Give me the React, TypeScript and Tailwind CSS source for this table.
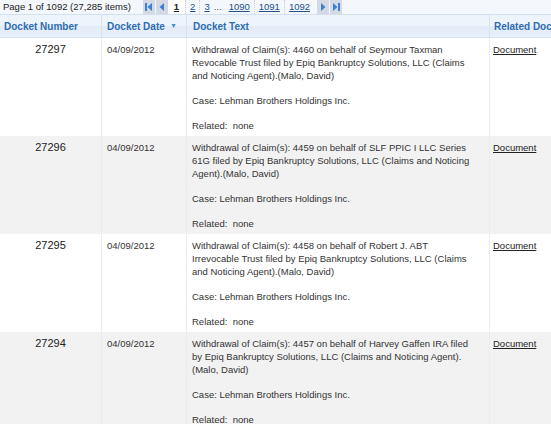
import React from "react";

type Row = {
  id: number;
  date: string;
  lines: string[];
};

const rows: Row[] = [
  {
    id: 27297,
    date: "04/09/2012",
    lines: [
      "Withdrawal of Claim(s): 4460 on behalf of Seymour Taxman",
      "Revocable Trust filed by Epiq Bankruptcy Solutions, LLC (Claims",
      "and Noticing Agent).(Malo, David)",
    ],
  },
  {
    id: 27296,
    date: "04/09/2012",
    lines: [
      "Withdrawal of Claim(s): 4459 on behalf of SLF PPIC I LLC Series",
      "61G filed by Epiq Bankruptcy Solutions, LLC (Claims and Noticing",
      "Agent).(Malo, David)",
    ],
  },
  {
    id: 27295,
    date: "04/09/2012",
    lines: [
      "Withdrawal of Claim(s): 4458 on behalf of Robert J. ABT",
      "Irrevocable Trust filed by Epiq Bankruptcy Solutions, LLC (Claims",
      "and Noticing Agent).(Malo, David)",
    ],
  },
  {
    id: 27294,
    date: "04/09/2012",
    lines: [
      "Withdrawal of Claim(s): 4457 on behalf of Harvey Gaffen IRA filed",
      "by Epiq Bankruptcy Solutions, LLC (Claims and Noticing Agent).",
      "(Malo, David)",
    ],
  },
];

const PagerIcon = ({ kind }: { kind: "first" | "prev" | "next" | "last" }) => (
  <span className="flex h-[14px] w-[12px] items-center justify-center bg-[#d3dae3]">
    <svg width="9" height="10" viewBox="0 0 9 10">
      {kind === "first" && (
        <>
          <rect x="1" y="1" width="2" height="8" fill="#3d7fd6" />
          <path d="M8 1 L3.5 5 L8 9 Z" fill="#3d7fd6" />
        </>
      )}
      {kind === "prev" && <path d="M7 1 L2.5 5 L7 9 Z" fill="#3d7fd6" />}
      {kind === "next" && <path d="M2 1 L6.5 5 L2 9 Z" fill="#3d7fd6" />}
      {kind === "last" && (
        <>
          <path d="M1 1 L5.5 5 L1 9 Z" fill="#3d7fd6" />
          <rect x="6" y="1" width="2" height="8" fill="#3d7fd6" />
        </>
      )}
    </svg>
  </span>
);

const PageLink = ({ n, sep = true }: { n: string; sep?: boolean }) => (
  <span className={`px-[4px] ${sep ? "border-l border-dotted border-[#c8ced6]" : ""}`}>
    <span className="text-[#24508a] underline">{n}</span>
  </span>
);

const cols = "grid grid-cols-[102px_85px_303px_120px]";

export default function App() {
  return (
    <div className="h-[424px] w-[551px] overflow-hidden bg-white font-['Liberation_Sans',Arial,sans-serif] text-[9.5px] text-[#333]">
      {/* pager */}
      <div className="flex h-[14px] items-center bg-[#f4f7fb]">
        <span className="pl-[3px] pr-[12px] text-[#222]">Page 1 of 1092 (27,285 items)</span>
        <PagerIcon kind="first" />
        <span className="ml-[1px]">
          <PagerIcon kind="prev" />
        </span>
        <span className="flex h-[14px] items-center bg-white px-[6px] font-bold text-[#222] underline">1</span>
        <PageLink n="2" />
        <PageLink n="3" />
        <span className="pr-[3px] text-[#24508a]">...</span>
        <PageLink n="1090" sep={false} />
        <PageLink n="1091" />
        <PageLink n="1092" />
        <span className="ml-[3px]">
          <PagerIcon kind="next" />
        </span>
        <span className="ml-[1px]">
          <PagerIcon kind="last" />
        </span>
      </div>

      {/* header */}
      <div className={`${cols} h-[24px] border-y border-[#d5e0ee] bg-[linear-gradient(#eef4fc_0%,#eef4fc_50%,#e2ebf7_52%,#e8f0fa_100%)] text-[10px] font-bold text-[#2f6cb1]`}>
        <div className="flex items-center border-r border-[#d9e3f0] pl-[4px]">Docket Number</div>
        <div className="flex items-center justify-between border-r border-[#d9e3f0] pl-[5px] pr-[9px]">
          <span>Docket Date</span>
          <span className="text-[7px] text-[#4a8ad6]">▼</span>
        </div>
        <div className="flex items-center border-r border-[#d9e3f0] pl-[6px]">Docket Text</div>
        <div className="flex items-center whitespace-nowrap pl-[4px]">Related Documents</div>
      </div>

      {/* rows */}
      {rows.map((row, i) => (
        <div key={row.id} className={`${cols} ${i % 2 === 1 ? "bg-[#f2f2f2]" : "bg-white"}`}>
          <div className="border-r border-[#e8edf5] pt-[5px] text-center text-[11px] leading-[13px] text-[#222]">
            {row.id}
          </div>
          <div className="border-r border-[#e8edf5] pl-[5px] pt-[5px] leading-[13px]">{row.date}</div>
          <div className="border-r border-[#e8edf5] pb-[4px] pl-[5px] pt-[5px] leading-[13px] whitespace-nowrap">
            {row.lines.map((l) => (
              <div key={l}>{l}</div>
            ))}
            <div className="mt-[12px]">Case: Lehman Brothers Holdings Inc.</div>
            <div className="mt-[12px]">Related:&nbsp; none</div>
          </div>
          <div className="pl-[3px] pt-[5px] leading-[13px]">
            <span className="text-[#222] underline">Document</span>
          </div>
        </div>
      ))}
    </div>
  );
}
